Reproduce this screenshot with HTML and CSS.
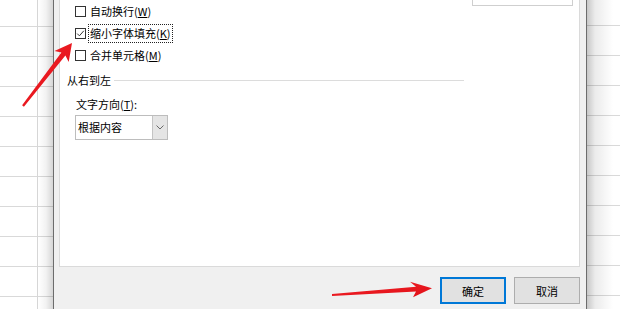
FILE: index.html
```html
<!DOCTYPE html>
<html lang="zh-CN">
<head>
<meta charset="utf-8">
<title>设置单元格格式</title>
<link rel="stylesheet" href="styles.css">
</head>
<body>
<div class="sheet sheet-left"></div>
<div class="dialog">
  <div class="panel">
    <div class="main-col">
      <div class="opt">
        <span class="box"></span>
        <span class="lbl">自动换行(<u>W</u>)</span>
      </div>
      <div class="opt">
        <span class="box">
          <svg class="check" viewBox="0 0 9 9" width="9" height="9"><polyline points="1.2,4.6 3.4,6.8 7.8,1.8" fill="none" stroke="#333" stroke-width="1"/></svg>
        </span>
        <span class="lbl focus">缩小字体填充(<u>K</u>)</span>
      </div>
      <div class="opt">
        <span class="box"></span>
        <span class="lbl">合并单元格(<u>M</u>)</span>
      </div>
      <div class="group-head">
        <span class="group-title">从右到左</span>
        <span class="group-line"></span>
      </div>
      <div class="field-label">文字方向(<u>T</u>):</div>
      <div class="select">
        <span class="select-text">根据内容</span>
        <span class="select-btn">
          <svg viewBox="0 0 8 5" width="8" height="5"><polyline points="0.5,0.5 4,4 7.5,0.5" fill="none" stroke="#6a6a6a" stroke-width="1"/></svg>
        </span>
      </div>
    </div>
    <div class="side-col">
      <div class="topbox"></div>
    </div>
  </div>
  <div class="buttons">
    <button class="btn btn-default">确定</button>
    <button class="btn">取消</button>
  </div>
</div>
<div class="sheet sheet-right"></div>

<svg class="arrows" viewBox="0 0 620 309" width="620" height="309">
  <defs>
    <linearGradient id="red" x1="0" y1="0" x2="1" y2="1">
      <stop offset="0" stop-color="#f22228"/>
      <stop offset="1" stop-color="#e01018"/>
    </linearGradient>
  </defs>
  <polygon fill="url(#red)" points="22.1,105.3 61.4,52.5 54.5,50.9 72,43 68.7,61.9 65.4,55.6 23.9,106.7"/>
  <polygon fill="url(#red)" points="332,293.9 416,286.7 410,281.8 432,288.3 413,297.2 416,291.5 332,296.1"/>
</svg>
</body>
</html>
```
FILE: styles.css
```css
* { box-sizing: border-box; }

html, body {
  margin: 0;
  padding: 0;
}

body {
  width: 620px;
  height: 309px;
  overflow: hidden;
  display: grid;
  grid-template-columns: 53px 534px 1fr;
  font-family: "Noto Sans CJK SC", "Noto Sans", sans-serif;
  font-size: 11px;
  color: #000;
  background: #fff;
}

.sheet {
  height: 309px;
  background-color: #fff;
}

.sheet-left {
  background-image:
    linear-gradient(to right, transparent 37px, #d6d6d6 37px, #d6d6d6 38px, transparent 38px),
    linear-gradient(to right, rgba(0,0,0,0) 38px, rgba(0,0,0,0.05) 46px, rgba(0,0,0,0.16) 53px),
    linear-gradient(to bottom, transparent 29px, #d9d9d9 29px);
  background-size: 100% 100%, 100% 100%, 100% 30px;
  background-position: 0 0, 0 0, 0 -3px;
}

.sheet-right {
  background-image:
    linear-gradient(to right, rgba(0,0,0,0.22) 0, rgba(0,0,0,0.08) 8px, rgba(0,0,0,0) 26px),
    linear-gradient(to bottom, transparent 29px, #d9d9d9 29px);
  background-size: 100% 100%, 100% 30px;
  background-position: 0 0, 0 -4px;
}

.dialog {
  height: 309px;
  background: #f0f0f0;
  border-left: 1px solid #6c6c6c;
  border-right: 1px solid #6c6c6c;
  padding: 0 6px 0 5px;
  display: flex;
  flex-direction: column;
}

.panel {
  height: 267px;
  background: #fff;
  border: 1px solid #dadada;
  border-top: none;
  display: flex;
}

.main-col {
  flex: 1;
  padding-left: 15px;
  display: flex;
  flex-direction: column;
  align-items: flex-start;
}

.side-col {
  width: 101px;
  margin-right: 6px;
}

.topbox {
  height: 6px;
  background: #fff;
  border: 1px solid #cfcfcf;
  border-top: none;
}

.opt {
  height: 22px;
  display: flex;
  align-items: center;
}

.box {
  width: 11px;
  height: 11px;
  border: 1px solid #333;
  background: #fff;
  display: flex;
  align-items: center;
  justify-content: center;
  margin-right: 2px;
}

.check { display: block; }

.lbl {
  line-height: 17px;
  padding: 0 1px;
  border: 1px solid transparent;
  white-space: nowrap;
}

.lbl.focus {
  border: 1px dotted #222;
}

u { text-underline-offset: 1px; }

.group-head {
  align-self: stretch;
  margin-left: -8px;
  margin-right: 8px;
  margin-top: 6px;
  height: 16px;
  display: flex;
  align-items: center;
  gap: 3px;
}

.group-title {
  line-height: 16px;
  white-space: nowrap;
}

.group-line {
  flex: 1;
  height: 1px;
  background: #dcdcdc;
  margin-top: 1px;
}

.field-label {
  margin-top: 8px;
  margin-left: 1px;
  line-height: 16px;
}

.select {
  margin-top: 3px;
  width: 93px;
  height: 25px;
  border: 1px solid #bdbdbd;
  background: #fff;
  display: flex;
}

.select-text {
  flex: 1;
  padding-left: 2px;
  line-height: 23px;
}

.select-btn {
  width: 15px;
  background: #e5e5e5;
  border-left: 1px solid #c4c4c4;
  display: flex;
  align-items: center;
  justify-content: center;
}

.select-btn svg { display: block; }

.buttons {
  margin-top: 10px;
  display: flex;
  justify-content: flex-end;
  gap: 8px;
}

.btn {
  width: 66px;
  height: 27px;
  padding: 0;
  margin: 0;
  font-family: inherit;
  font-size: 11px;
  color: #000;
  background: #e1e1e1;
  border: 1px solid #adadad;
  border-radius: 0;
}

.btn-default {
  border: 2px solid #0078d7;
}

.arrows {
  position: absolute;
  left: 0;
  top: 0;
  pointer-events: none;
}
```
